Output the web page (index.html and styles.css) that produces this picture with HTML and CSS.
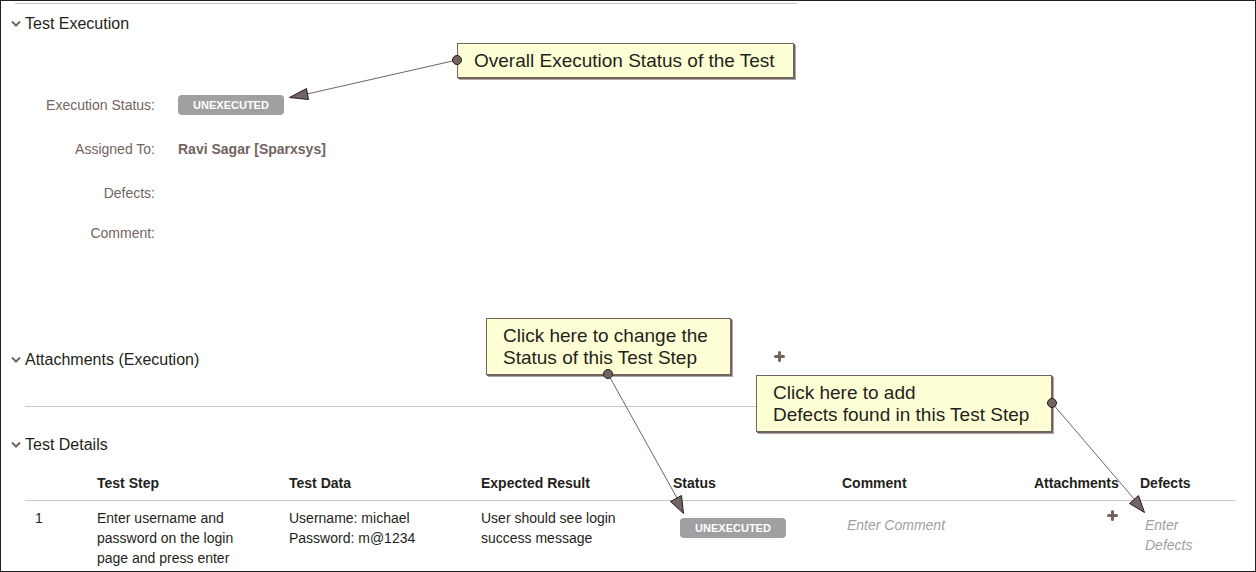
FILE: index.html
```html
<!DOCTYPE html>
<html lang="en">
<head>
<meta charset="utf-8">
<title>Test Execution</title>
<link rel="stylesheet" href="styles.css">
</head>
<body>
<main class="page">
  <section class="section">
    <hr class="rule top">
    <h2 class="heading"><button class="toggle" type="button"><svg class="chevron" viewBox="0 0 10 8" aria-hidden="true"><path d="M1 1.5 5 5.5 9 1.5"/></svg>Test Execution</button></h2>
    <dl class="fields">
      <dt>Execution Status:</dt><dd><button class="badge" type="button">UNEXECUTED</button></dd>
      <dt>Assigned To:</dt><dd>Ravi Sagar [Sparxsys]</dd>
      <dt>Defects:</dt><dd></dd>
      <dt>Comment:</dt><dd></dd>
    </dl>
  </section>

  <section class="section attachments">
    <div class="bar">
      <h2 class="heading"><button class="toggle" type="button"><svg class="chevron" viewBox="0 0 10 8" aria-hidden="true"><path d="M1 1.5 5 5.5 9 1.5"/></svg>Attachments (Execution)</button></h2>
      <button class="add" type="button" aria-label="Add attachment"><svg class="plus" viewBox="0 0 11 11" aria-hidden="true"><path d="M5.5 1.5v8M1.5 5.5h8"/></svg></button>
    </div>
    <hr class="rule">
  </section>

  <section class="details">
    <h2 class="heading"><button class="toggle" type="button"><svg class="chevron" viewBox="0 0 10 8" aria-hidden="true"><path d="M1 1.5 5 5.5 9 1.5"/></svg>Test Details</button></h2>
    <table class="steps">
      <colgroup><col class="c-num"><col class="c-text"><col class="c-text"><col class="c-text"><col class="c-status"><col class="c-text"><col class="c-attach"><col class="c-defects"></colgroup>
      <thead>
        <tr><th></th><th>Test Step</th><th>Test Data</th><th>Expected Result</th><th>Status</th><th>Comment</th><th>Attachments</th><th>Defects</th></tr>
      </thead>
      <tbody>
        <tr>
          <td class="num">1</td>
          <td>Enter username and password on the login page and press enter</td>
          <td>Username: michael<br>Password: m@1234</td>
          <td>User should see login success message</td>
          <td class="status"><button class="badge" type="button">UNEXECUTED</button></td>
          <td class="entry"><input class="field" type="text" placeholder="Enter Comment" aria-label="Comment"></td>
          <td class="attach"><button class="add" type="button" aria-label="Add step attachment"><svg class="plus" viewBox="0 0 11 11" aria-hidden="true"><path d="M5.5 1.5v8M1.5 5.5h8"/></svg></button></td>
          <td class="entry"><textarea class="field defects" rows="2" placeholder="Enter Defects" aria-label="Defects"></textarea></td>
        </tr>
      </tbody>
    </table>
  </section>

  <p class="callout overall">Overall Execution Status of the Test</p>
  <p class="callout change">Click here to change the<br>Status of this Test Step</p>
  <p class="callout defect">Click here to add<br>Defects found in this Test Step</p>
  <svg class="arrows" width="1256" height="572" viewBox="0 0 1256 572" aria-hidden="true">
    <path class="line" d="M457 60 307 94M608 374 677 498M1052 403 1135 500"/>
    <path class="tip" d="M289.500 97.500 306.500 88.500 308.500 99.500ZM683.500 513.500 670.500 501.500 681.500 495.500ZM1144.500 512.500 1129.500 503.500 1138.500 495.500Z"/>
    <circle class="tip" cx="457" cy="60" r="4.500"/>
    <circle class="tip" cx="608" cy="374" r="4.500"/>
    <circle class="tip" cx="1052" cy="403" r="4.500"/>
  </svg>
</main>
</body>
</html>
```
FILE: styles.css
```css
* { box-sizing: border-box; }

body {
  margin: 0;
  background: #fff;
  color: #231f20;
  font: 14px/20px "Liberation Sans", Arial, sans-serif;
}

button, input, textarea {
  margin: 0;
  padding: 0;
  border: 0;
  background: none;
  color: inherit;
  font: inherit;
}

button { cursor: pointer; }

.page {
  position: relative;
  min-height: 100vh;
  padding: 2px 19px 2px 10px;
  border: 1px solid #231f20;
  overflow: hidden;
}

.section { max-width: 786px; }

.heading {
  margin: 0;
  padding-top: 1px;
  font-size: 16px;
  font-weight: 400;
  line-height: 20px;
}

.toggle {
  display: flex;
  align-items: center;
  gap: 4px;
}

.chevron {
  width: 10px;
  height: 8px;
  fill: none;
  stroke: #736460;
  stroke-width: 2;
}

.fields {
  display: grid;
  grid-template-columns: 144px 1fr;
  column-gap: 23px;
  row-gap: 24px;
  margin: 61px 0 0;
  color: #736460;
}

.fields dt { text-align: right; }
.fields dd { margin: 0; font-weight: 700; }
.fields dt:last-of-type { margin-top: -4px; }

.badge {
  display: block;
  width: 106px;
  height: 20px;
  padding-top: 1px;
  border-radius: 4px;
  background: #a09fa1;
  color: #fff;
  font-size: 11px;
  font-weight: 700;
  line-height: 19px;
}

.attachments { margin-top: 106px; }

.bar {
  display: flex;
  justify-content: space-between;
  padding-right: 12px;
}

.add {
  display: block;
  height: 15px;
}

.plus {
  display: block;
  width: 11px;
  height: 11px;
  fill: none;
  stroke: #736460;
  stroke-width: 3;
  stroke-linecap: round;
}

.rule {
  height: 1px;
  margin: 36px 0 0 14px;
  border: 0;
  background: #c8c8c8;
}

.rule.top {
  margin: 0 0 9px 4px;
  background: #c8c3c8;
}

.details { margin-top: 27px; }

.steps {
  width: calc(100% - 14px);
  margin: 18px 0 0 14px;
  border-collapse: collapse;
  table-layout: fixed;
}

.c-num { width: 72px; }
.c-text { width: 192px; }
.c-status { width: 169px; }
.c-attach { width: 106px; }
.c-defects { width: 96px; }

.steps th {
  padding: 0 0 7px;
  border-bottom: 1px solid #c8c8c8;
  text-align: left;
}

.steps td {
  padding: 7px 40px 0 0;
  vertical-align: top;
}

.steps .num { padding: 7px 0 0 10px; }
.steps .status { padding: 17px 0 0 7px; }
.steps .entry { padding: 14px 0 0 5px; }
.steps .attach { padding: 7px 0 0 73px; }

.field {
  display: block;
  width: 100%;
  height: 20px;
  font-style: italic;
}

.field::placeholder {
  color: #a09fa1;
  opacity: 1;
}

.defects {
  width: 60px;
  height: 40px;
  resize: none;
  overflow: hidden;
}

.callout {
  position: absolute;
  margin: 0;
  padding: 6px 22px 5px 16px;
  border: 1px solid #736460;
  background: #ffffd5;
  box-shadow: 1px 1px 0 #736460, 2px 2px 0 #b0a8a8;
  color: #231f20;
  font-size: 19px;
  line-height: 22px;
  white-space: nowrap;
}

.overall { left: 456px; top: 42px; padding-right: 18px; }
.change { left: 485px; top: 317px; }
.defect { left: 755px; top: 374px; }

.arrows {
  position: absolute;
  left: -1px;
  top: -1px;
  pointer-events: none;
}

.line { fill: none; stroke: #736460; }

.tip { fill: #736460; stroke: #231f20; }
```
